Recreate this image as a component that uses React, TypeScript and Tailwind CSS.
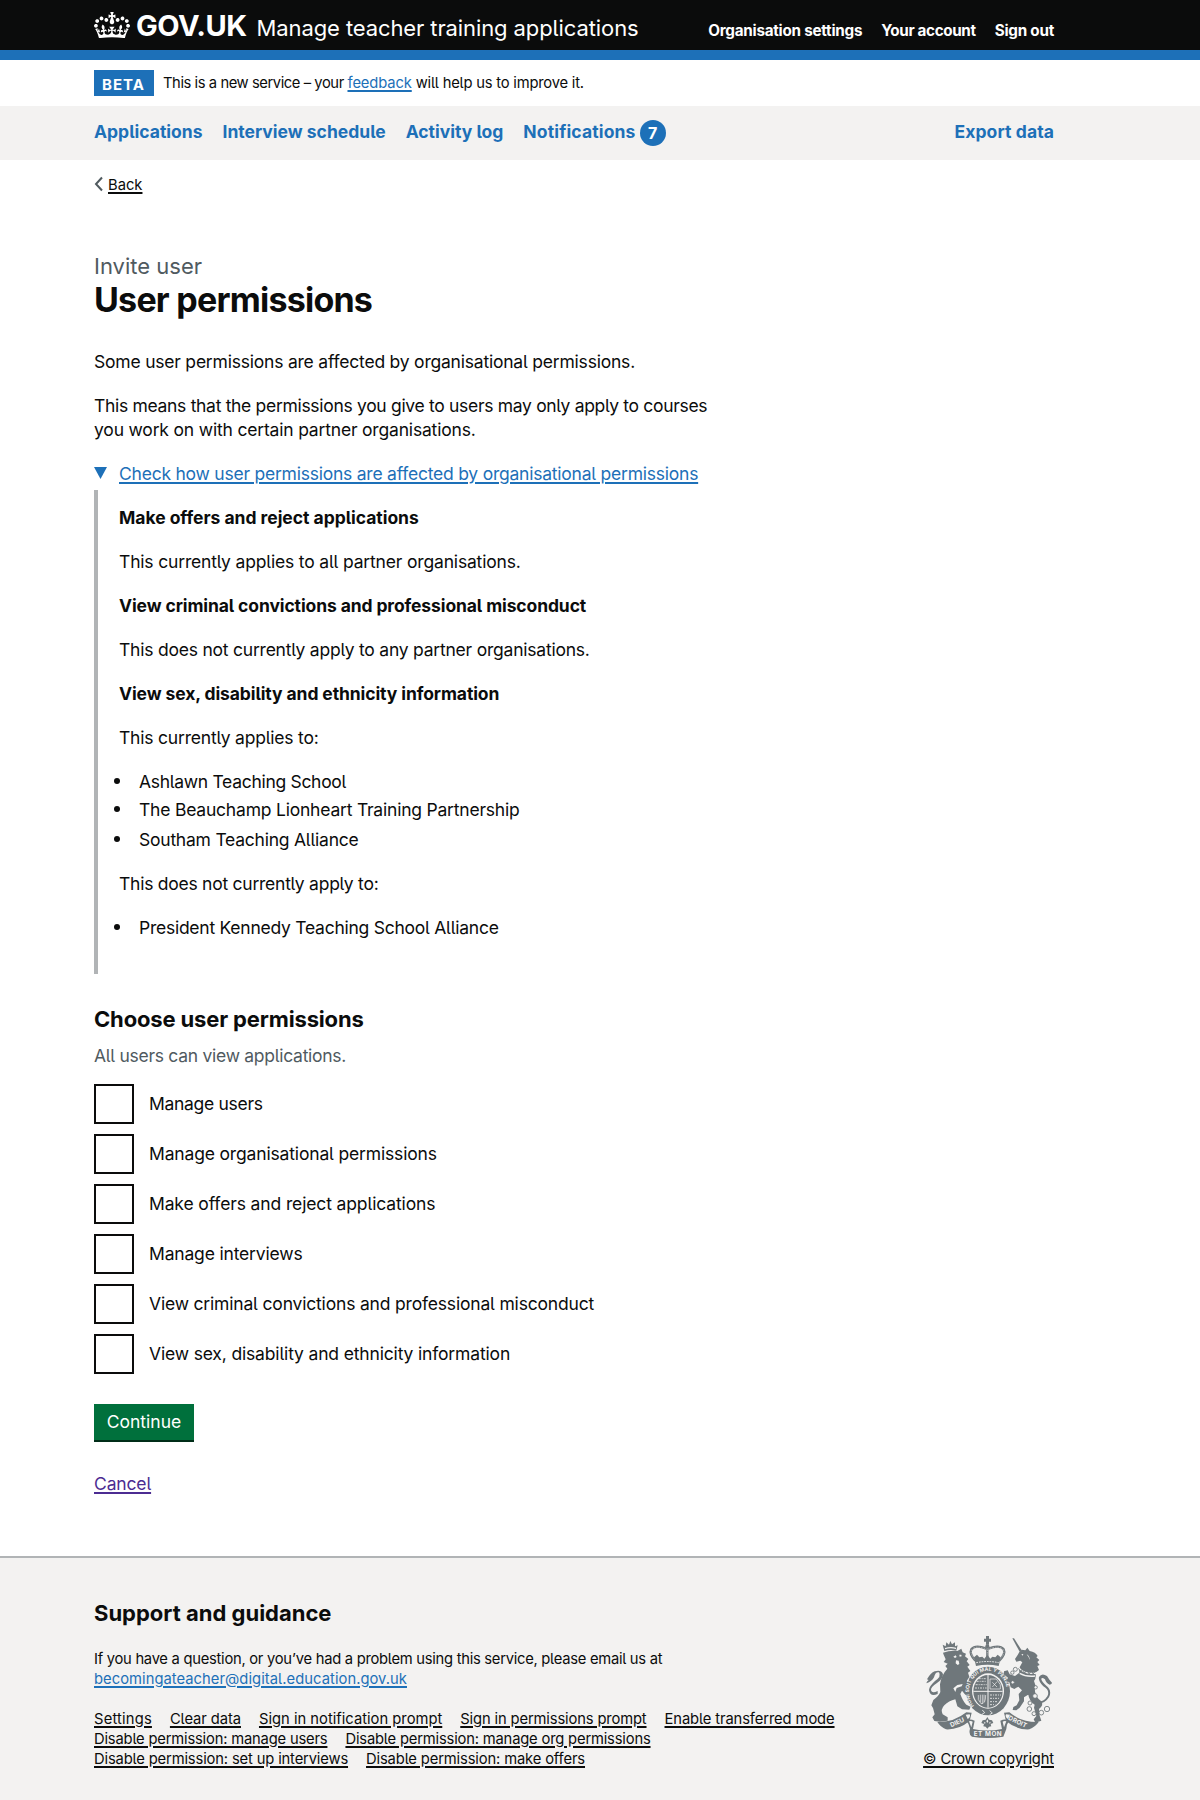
const link = "underline decoration-2 underline-offset-2";
const small = "text-[14.75px] leading-5";
const bodyText = "text-[17.5px] leading-6";
const column = "ml-[94px] w-[960px]";

const INK = "#6f777b";
const PAPER = "#f3f2f1";

function Crown() {
  return (
    <svg viewBox="0 0 132 97" className="h-[26.5px] w-9 shrink-0 fill-white" aria-hidden="true">
      <path d="M25 30.2c3.5 1.5 7.7-.2 9.1-3.7 1.5-3.6-.2-7.8-3.9-9.2-3.6-1.4-7.6.3-9.1 3.9-1.4 3.5.3 7.5 3.9 9zM9 39.5c3.6 1.5 7.8-.2 9.2-3.7 1.5-3.6-.2-7.8-3.9-9.1-3.6-1.5-7.6.2-9.1 3.8-1.4 3.5.3 7.5 3.8 9zM4.4 57.2c3.5 1.5 7.7-.2 9.1-3.8 1.5-3.6-.2-7.7-3.9-9.1-3.5-1.5-7.6.3-9.1 3.8-1.4 3.5.3 7.6 3.9 9.1zm38.3-21.4c3.5 1.5 7.7-.2 9.1-3.8 1.5-3.6-.2-7.7-3.9-9.1-3.6-1.5-7.6.3-9.1 3.8-1.3 3.6.4 7.7 3.9 9.1zm64.4-5.6c-3.6 1.5-7.8-.2-9.1-3.7-1.5-3.6.2-7.8 3.8-9.2 3.6-1.4 7.7.3 9.2 3.9 1.3 3.5-.4 7.5-3.9 9zm15.9 9.3c-3.6 1.5-7.7-.2-9.1-3.7-1.5-3.6.2-7.8 3.7-9.1 3.6-1.5 7.7.2 9.2 3.8 1.5 3.5-.3 7.5-3.8 9zm4.7 17.7c-3.6 1.5-7.8-.2-9.2-3.8-1.5-3.6.2-7.7 3.9-9.1 3.6-1.5 7.7.3 9.2 3.8 1.3 3.5-.4 7.6-3.9 9.1zM89.3 35.8c-3.6 1.5-7.8-.2-9.2-3.8-1.4-3.6.2-7.7 3.9-9.1 3.6-1.5 7.7.3 9.2 3.8 1.4 3.6-.3 7.7-3.9 9.1zM69.7 17.7l8.9 4.7V9.3l-8.9 2.8c-.2-.3-.5-.6-.9-.9L72.4 0H59.6l3.5 11.2c-.3.3-.6.5-.9.9l-8.8-2.8v13.1l8.8-4.7c.3.3.6.7.9.9l-5 15.4v.1c-.2.8-.4 1.6-.4 2.4 0 4.1 3.1 7.5 7 8.1h.2c.3 0 .7.1 1 .1.4 0 .7 0 1-.1h.2c4-.6 7.1-4.1 7.1-8.1 0-.8-.1-1.7-.4-2.4V34l-5.1-15.4c.4-.2.7-.6 1-.9zM66 92.8c16.9 0 32.8 1.1 47.1 3.2 4-16.9 8.9-26.7 14-33.5l-9.6-3.4c1 4.9 1.1 7.2 0 10.2-1.5-1.4-3-4.3-4.2-8.7L108.6 76c2.8-2 5-3.2 7.5-3.3-4.4 9.4-10 11.9-13.6 11.2-4.3-.8-6.3-4.6-5.6-7.9 1-4.7 5.7-5.9 8-.5 4.3-8.7-3-11.4-7.6-8.8 7.1-7.2 7.9-13.5 2.1-21.1-8 6.1-8.1 12.3-4.5 20.8-4.7-5.4-12.1-2.5-9.5 6.2 3.4-5.2 7.9-2 7.2 3.1-.6 4.3-6.4 7.8-13.5 7.2-10.3-.9-10.9-8-11.2-13.8 2.5-.5 7.1 1.8 11 7.3L80.2 60c-4.1 4.4-8 5.3-12.3 5.4 1.4-4.4 8-11.6 8-11.6H55.5s6.4 7.2 7.9 11.6c-4.2-.1-8-1-12.3-5.4l1.4 16.4c3.9-5.5 8.5-7.7 10.9-7.3-.3 5.8-.9 12.8-11.1 13.8-7.2.6-12.9-2.9-13.5-7.2-.7-5 3.8-8.3 7.1-3.1 2.7-8.7-4.6-11.6-9.4-6.2 3.7-8.5 3.6-14.7-4.6-20.8-5.8 7.6-5 13.9 2.2 21.1-4.7-2.6-11.9.1-7.7 8.8 2.3-5.5 7.1-4.2 8.1.5.7 3.3-1.3 7.1-5.7 7.9-3.5.7-9-1.8-13.5-11.2 2.5.1 4.7 1.3 7.5 3.3l-4.7-15.4c-1.2 4.4-2.7 7.2-4.3 8.7-1.1-3-.9-5.3 0-10.2l-9.5 3.4c5 6.9 9.9 16.7 14 33.5 14.8-2.1 30.8-3.2 47.7-3.2z" />
    </svg>
  );
}

function CoatOfArms() {
  return (
    <svg viewBox="78 48 378 306" className="h-[102px] w-[126px]" fill={INK} aria-hidden="true">
      <defs>
        <path id="garter-arc" d="M222 258 A57 63 0 1 1 306 258" />
      </defs>
      {/* lion */}
      <path d="M133 93 L128 74 L137 79 L139 67 L147 74 L151 63 L156 73 L165 67 L165 79 L173 76 L169 92 Q150 88 133 93Z" />
      <path fill={PAPER} d="M135 88 Q151 82 168 87 L168 83 Q151 79 135 84Z" />
      <path d="M131 104 L129 98 Q150 91 172 93 L184 86 L188 97 L198 101 L195 109 L205 117 L200 124 L209 135 L202 140 L211 153 L204 158 L208 170 L201 182 L210 195 L208 216 L214 225 L203 230 L194 222 L186 212 L181 222 Q188 243 199 254 L212 260 L208 269 L186 268 L172 259 L166 238 Q146 243 133 256 Q121 268 128 283 L143 292 L143 302 L119 305 L103 303 L97 292 L104 283 L99 264 L94 256 L100 240 Q116 229 121 216 L120 193 Q124 165 142 146 L136 138 L143 131 L131 126 L137 118Z" />
      <path fill={PAPER} d="M160 110 l7 -4 l3 5 l-5 3z M178 104 l6 0 l1 5 l-6 1z M168 121 l8 1 l2 10 l-5 3 l-6 -5z M160 205 l12 -10 l16 -3 l-3 7 l-15 5 l-4 12z" />
      <path d="M113 222 Q90 232 87 210 Q88 198 105 183 Q125 170 117 157 Q106 154 102 172 Q96 184 79 190 Q80 184 86 180 L81 178 Q92 158 104 154 Q125 148 129 163 Q129 177 111 189 Q91 202 93 211 Q96 222 113 213Z" />
      {/* crown */}
      <path d="M258 48 h9 v8 h6 v9 h-6 v9 h-9 v-9 h-6 v-9 h6z" />
      <circle cx="262" cy="79" r="6" />
      <path fill="none" stroke={INK} strokeWidth="7" d="M226 122 Q207 102 214 88 Q226 73 259 86 M298 122 Q318 102 311 88 Q299 73 265 86 M262 84 V121" />
      <path fill="none" stroke={PAPER} strokeWidth="2" strokeDasharray="2 3" d="M226 120 Q209 102 215 89 Q226 75 259 87 M298 120 Q316 102 310 89 Q299 75 265 87 M262 86 V119" />
      <path d="M222 112 l9 -8 l7 8 l9 -2 l6 6 l9 -12 l9 12 l6 -6 l9 2 l7 -8 l9 8 l-6 26 q-34 -8 -68 0z" />
      <path fill="none" stroke={PAPER} strokeWidth="3" strokeDasharray="5 3" d="M229 128 Q262 121 296 128" />
      {/* garter and shield */}
      <ellipse cx="264" cy="213" rx="66" ry="73" />
      <ellipse cx="264" cy="213" rx="48" ry="53" fill={PAPER} />
      <ellipse cx="264" cy="214" rx="44" ry="49" />
      <text fontFamily="Inter" fontWeight="700" fontSize="15" fill={PAPER} letterSpacing="0.3">
        <textPath href="#garter-arc">HONI SOIT QUI MAL Y PENSE</textPath>
      </text>
      <path stroke={PAPER} strokeWidth="3" fill="none" d="M264 165 V263 M220 214 H308" />
      <path stroke={PAPER} strokeWidth="2.4" fill="none" strokeDasharray="6 3 3 3" d="M230 184 H260 M227 194 H260 M225 204 H260 M236 176 H260 M270 225 H303 M270 235 H300 M270 245 H294 M270 254 H286" />
      <path stroke={PAPER} strokeWidth="2" fill="none" d="M270 177 H289 L301 194 V207 H270Z M277 201 l14 -16 M277 187 l14 14 M235 225 q-4 14 8 26 q14 2 14 -26 M241 224 v22 M247 224 v26 M252 224 v22" />
      <path fill="none" stroke={PAPER} strokeWidth="2.5" d="M247 270 l7 8 l-8 5 M269 272 l8 7 l-8 5" />
      {/* unicorn */}
      <path d="M337 55 L342 55 L365 91 L359 95Z" />
      <path d="M358 96 L365 89 L376 91 L382 83 L389 93 Q407 96 413 108 L409 112 L418 120 L412 126 L419 135 L412 138 L417 150 L406 158 Q410 173 402 183 L407 198 L403 216 Q397 225 383 225 L372 232 L372 244 L359 263 L349 271 L338 270 L340 261 L350 256 L358 241 L356 222 L366 211 L355 200 L343 207 L332 202 L328 187 L319 183 L324 173 L311 163 L312 154 L323 151 L329 163 L345 168 L358 158 Q356 142 367 127 L361 122 L349 125 L345 117 L353 105Z" />
      <path d="M384 220 L404 209 Q407 232 424 244 Q432 256 417 267 L419 287 L424 302 L406 308 L401 298 L409 288 L402 263 L404 254 Q388 246 384 220Z" />
      <path fill={PAPER} d="M364 103 l6 -1 l-2 5z M380 103 q10 6 9 17 l-3 -8z" />
      <path fill="none" stroke={PAPER} strokeWidth="4" d="M355 143 Q378 165 411 159 M359 160 Q378 171 405 168" />
      <path fill="none" stroke={INK} strokeWidth="2.5" d="M355 145 l7 10 l5 -8 l7 12 l7 -10 l6 13 l8 -11 l4 11 l9 -11" />
      <path d="M404 245 Q430 249 442 229 Q451 211 430 199 Q414 183 417 171 Q425 157 441 168 Q449 182 456 188 Q456 193 449 194 Q438 190 435 178 Q424 170 424 178 Q425 185 439 197 Q457 211 447 232 Q433 254 406 252Z" />
      <g fill={PAPER} stroke={INK} strokeWidth="2.6">
        <circle cx="346" cy="148" r="6" />
        <circle cx="337" cy="158" r="5" />
        <circle cx="338" cy="187" r="5" />
        <circle cx="407" cy="202" r="5" />
        <circle cx="405" cy="228" r="7" />
        <circle cx="390" cy="249" r="6" />
        <circle cx="388" cy="267" r="7" />
        <circle cx="402" cy="281" r="6" />
        <circle cx="424" cy="278" r="7" />
        <circle cx="441" cy="267" r="8" />
      </g>
      {/* motto ribbon */}
      <path d="M112 306 Q160 308 199 277 L215 278 L209 303 Q176 330 138 328 Q122 322 112 306Z M416 306 Q365 308 328 277 L312 278 L318 303 Q350 330 388 328 Q405 322 416 306Z" />
      <path fill={PAPER} d="M197 284 L209 283 Q213 291 203 297Z M330 284 L318 283 Q314 291 324 297Z" />
      <path d="M199 302 Q209 295 224 302 L219 327 Q262 336 306 327 L301 302 Q316 295 327 302 Q320 312 319 327 L310 350 Q262 358 216 350 Q205 344 210 326 Q208 312 199 302Z" />
      <path fill={PAPER} d="M207 304 Q213 301 218 305 L214 322Z M319 304 Q313 301 308 305 L312 322Z" />
      <path d="M262 291 l5 8 l9 2 l4 8 l-8 3 l2 7 l-7 1 l-5 6 l-5 -6 l-7 -1 l2 -7 l-8 -3 l4 -8 l9 -2z" />
      <path fill={PAPER} d="M262 298 l3 6 l-3 5 l-3 -5z M252 305 l5 3 l-3 4z M272 305 l-5 3 l3 4z" />
      <g fontFamily="Inter" fontWeight="700" fontSize="19" fill={PAPER} textAnchor="middle">
        <text transform="translate(174 313) rotate(-24)">DIEU</text>
        <text x="263" y="348" textLength="84">ET MON</text>
        <text transform="translate(350 311) rotate(26)">DROIT</text>
      </g>
    </svg>
  );
}

function Bullet({ className, children }: { className: string; children: string }) {
  return (
    <li className="flex">
      <span className="mt-2 mr-[19px] -ml-[5px] size-1.5 shrink-0 rounded-full bg-[#0b0c0c]" />
      <span className={className}>{children}</span>
    </li>
  );
}

const permissions = [
  { label: "Manage users", className: "tracking-[-0.3px]" },
  { label: "Manage organisational permissions", className: "tracking-[-0.16px]" },
  { label: "Make offers and reject applications", className: "tracking-[-0.13px]" },
  { label: "Manage interviews", className: "tracking-[-0.17px]" },
  { label: "View criminal convictions and professional misconduct", className: "tracking-[-0.18px]" },
  { label: "View sex, disability and ethnicity information", className: "tracking-[-0.16px]" },
];

const footerLinks = [
  [
    { label: "Settings", className: "tracking-[0.18px]" },
    { label: "Clear data", className: "tracking-[-0.08px]" },
    { label: "Sign in notification prompt", className: "tracking-normal" },
    { label: "Sign in permissions prompt", className: "tracking-[-0.14px]" },
    { label: "Enable transferred mode", className: "tracking-[-0.11px]" },
  ],
  [
    { label: "Disable permission: manage users", className: "tracking-[-0.185px]" },
    { label: "Disable permission: manage org permissions", className: "tracking-[-0.18px]" },
  ],
  [
    { label: "Disable permission: set up interviews", className: "tracking-[-0.15px]" },
    { label: "Disable permission: make offers", className: "tracking-[-0.14px]" },
  ],
];

export default function App() {
  return (
    <div className="min-h-[1800px] bg-white text-[#0b0c0c] antialiased [font-family:Inter,sans-serif] [font-feature-settings:'cv05']">
      <header className="border-b-10 border-[#1d70b8] bg-[#0b0c0c] text-white">
        <div className={"flex h-[50px] items-start " + column}>
          <div className="pt-[11.5px]"><Crown /></div>
          <div className="ml-[6px] w-[111px] pt-2 text-[29px] leading-9 font-bold tracking-[-0.5px]">GOV.UK</div>
          <div className="ml-[9.5px] pt-3 text-[22px] leading-8 tracking-[-0.1px] whitespace-nowrap">Manage teacher training applications</div>
          <nav className="ml-auto flex gap-[19px] pt-[21px] text-[15.25px] leading-5 font-bold">
            <a className="tracking-[-0.25px]">Organisation settings</a>
            <a className="tracking-[-0.37px]">Your account</a>
            <a className="tracking-[-0.25px]">Sign out</a>
          </nav>
        </div>
      </header>

      <div className={"flex h-[46px] items-start pt-2.5 " + column}>
        <strong className="h-[26px] w-[60px] bg-[#1d70b8] pt-[5px] pl-2 text-[15px] leading-5 font-bold tracking-[1px] text-white">BETA</strong>
        <p className={"ml-[9px] pt-[3px] " + small}>
          <span className="tracking-[-0.43px]">This is a new service – your </span>
          <a className={"tracking-[-0.12px] text-[#1d70b8] " + link}>feedback</a>
          <span className="tracking-[-0.2px]"> will help us to improve it.</span>
        </p>
      </div>

      <nav className="bg-[#f3f2f1]">
        <div className={"flex h-[54px] gap-5 pt-3.5 text-[17.5px] leading-6 font-bold text-[#1d70b8] " + column}>
          <a>Applications</a>
          <a>Interview schedule</a>
          <a>Activity log</a>
          <a className="flex items-start gap-1">
            <span className="tracking-[0.15px]">Notifications</span>
            <span className="flex size-[26px] items-center justify-center rounded-full bg-[#1d70b8] text-base leading-5 text-white">7</span>
          </a>
          <a className="ml-auto tracking-[0.1px]">Export data</a>
        </div>
      </nav>

      <main className={column}>
        <div className={"flex pt-[15px] " + small}>
          <svg viewBox="0 0 10 16" className="mt-px h-4 w-[10px]" fill="none" stroke="#505a5f" strokeWidth="2">
            <path d="M8 1.5 L2 8 L8 14.5" />
          </svg>
          <a className={"ml-1 " + link}>Back</a>
        </div>

        <div className="mt-[57px] w-[630px]">
          <h1>
            <span className="block text-[22px] leading-7 text-[#505a5f]">Invite user</span>
            <span className="block text-[34px] leading-[39px] font-bold tracking-[-0.77px]">User permissions</span>
          </h1>
          <p className={"mt-[31px] tracking-[-0.21px] " + bodyText}>
            Some user permissions are affected by organisational permissions.
          </p>
          <p className={"mt-5 " + bodyText}>
            <span className="block tracking-[-0.31px]">This means that the permissions you give to users may only apply to courses</span>
            <span className="block tracking-[-0.18px]">you work on with certain partner organisations.</span>
          </p>

          <div className={"mt-5 " + bodyText}>
            <div className="flex text-[#1d70b8]">
              <svg viewBox="0 0 13 12" className="mt-[5px] mr-3 h-3 w-[13px] fill-[#1d70b8]">
                <path d="M0 0H13L6.5 12Z" />
              </svg>
              <a className={"tracking-[-0.23px] " + link}>Check how user permissions are affected by organisational permissions</a>
            </div>
            <div className="mt-1 flex flex-col gap-5 border-l-4 border-[#b1b4b6] pt-4 pb-[34px] pl-[21px]">
              <p className="font-bold tracking-[-0.03px]">Make offers and reject applications</p>
              <p className="tracking-[-0.17px]">This currently applies to all partner organisations.</p>
              <p className="font-bold tracking-[-0.11px]">View criminal convictions and professional misconduct</p>
              <p className="tracking-[-0.22px]">This does not currently apply to any partner organisations.</p>
              <p className="font-bold tracking-[-0.1px]">View sex, disability and ethnicity information</p>
              <p className="tracking-[-0.2px]">This currently applies to:</p>
              <ul className="[&>li:nth-child(1)]:mb-1 [&>li:nth-child(2)]:mb-1.5">
                <Bullet className="tracking-[-0.3px]">Ashlawn Teaching School</Bullet>
                <Bullet className="tracking-[-0.21px]">The Beauchamp Lionheart Training Partnership</Bullet>
                <Bullet className="tracking-[-0.23px]">Southam Teaching Alliance</Bullet>
              </ul>
              <p className="tracking-[-0.25px]">This does not currently apply to:</p>
              <ul>
                <Bullet className="tracking-[-0.25px]">President Kennedy Teaching School Alliance</Bullet>
              </ul>
            </div>
          </div>

          <h2 className="mt-[30px] text-[22px] leading-[30px] font-bold tracking-[-0.15px]">Choose user permissions</h2>
          <p className={"mt-2.5 tracking-[-0.28px] text-[#505a5f] " + bodyText}>All users can view applications.</p>
          <div className={"mt-4 flex flex-col gap-2.5 " + bodyText}>
            {permissions.map((p) => (
              <label key={p.label} className="flex h-10 items-center gap-[15px]">
                <input type="checkbox" className="size-10 appearance-none border-2 border-[#0b0c0c] bg-white" />
                <span className={p.className}>{p.label}</span>
              </label>
            ))}
          </div>
          <button className={"mt-[30px] block h-[38px] w-[100px] border-b-2 border-[#002d18] bg-[#00703c] text-white " + bodyText}>
            Continue
          </button>
          <p className={"mt-[30px] tracking-[-0.15px] " + bodyText}>
            <a className={"text-[#4c2c92] " + link}>Cancel</a>
          </p>
        </div>
      </main>

      <footer className="mt-[60px] h-[244px] border-t-2 border-[#b1b4b6] bg-[#f3f2f1]">
        <div className={"flex justify-between " + column}>
          <div className="pt-10">
            <h2 className="text-[22px] leading-[30px] font-bold">Support and guidance</h2>
            <p className={"mt-[21px] " + small}>
              <span className="block tracking-[-0.27px]">If you have a question, or you’ve had a problem using this service, please email us at</span>
              <a className={"tracking-[0.04px] text-[#1d70b8] " + link}>becomingateacher@digital.education.gov.uk</a>
            </p>
            <div className="mt-5">
              {footerLinks.map((row) => (
                <ul key={row[0].label} className={"flex gap-[18px] " + small}>
                  {row.map((item) => (
                    <li key={item.label} className={link + " " + item.className}>{item.label}</li>
                  ))}
                </ul>
              ))}
            </div>
          </div>
          <div className={"flex flex-col items-end pt-[78px] " + small}>
            <div className="mr-0.5"><CoatOfArms /></div>
            <a className={"mt-[11px] tracking-[-0.15px] " + link}>© Crown copyright</a>
          </div>
        </div>
      </footer>
    </div>
  );
}
